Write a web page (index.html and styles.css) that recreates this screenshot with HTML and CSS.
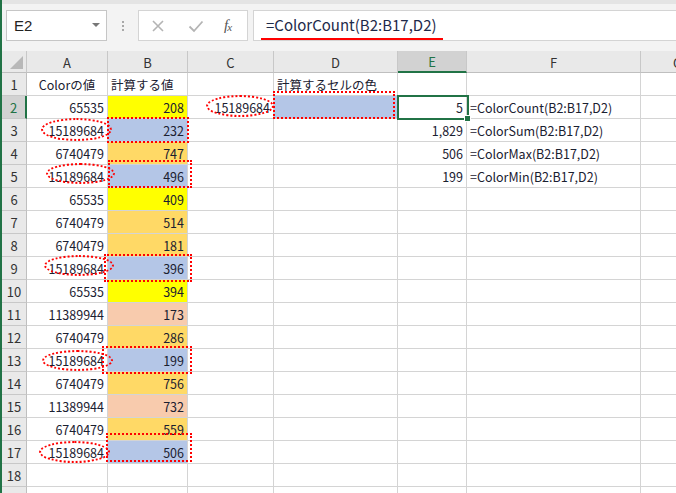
FILE: index.html
```html
<!DOCTYPE html>
<html lang="ja">
<head>
<meta charset="utf-8">
<title>ColorCount</title>
<link rel="stylesheet" href="styles.css">
</head>
<body>
<div class="app">
  <div class="toolbar">
    <div class="namebox"><span class="name">E2</span><span class="caret"></span></div>
    <div class="sep"><i></i><i></i><i></i></div>
    <div class="fbtns">
      <svg class="ico" width="14" height="14" viewBox="0 0 14 14"><path d="M2 2 L12 12 M12 2 L2 12" stroke="#b4b4b4" stroke-width="1.6" fill="none"/></svg>
      <svg class="ico" width="16" height="14" viewBox="0 0 16 14"><path d="M1.5 7.5 L6 12 L14.5 2.5" stroke="#b4b4b4" stroke-width="1.8" fill="none"/></svg>
      <span class="fx">f<sub>x</sub></span>
    </div>
    <div class="formula"><span class="ftext">=ColorCount(B2:B17,D2)</span></div>
  </div>

  <div class="sheet">
    <div class="corner"><span class="tri"></span></div>
    <div class="ch">A</div><div class="ch">B</div><div class="ch">C</div><div class="ch">D</div><div class="ch sel">E</div><div class="ch">F</div><div class="ch g">G</div>

    <div class="rh">1</div><div class="c ctr">Colorの値</div><div class="c">計算する値</div><div class="c"></div><div class="c">計算するセルの色</div><div class="c"></div><div class="c"></div><div class="c"></div>

    <div class="rh sel">2</div><div class="c r">65535</div><div class="c r y">208</div><div class="c r">15189684</div><div class="c bl"></div><div class="c r">5</div><div class="c">=ColorCount(B2:B17,D2)</div><div class="c"></div>
    <div class="rh">3</div><div class="c r">15189684</div><div class="c r bl">232</div><div class="c"></div><div class="c"></div><div class="c r">1,829</div><div class="c">=ColorSum(B2:B17,D2)</div><div class="c"></div>
    <div class="rh">4</div><div class="c r">6740479</div><div class="c r o">747</div><div class="c"></div><div class="c"></div><div class="c r">506</div><div class="c">=ColorMax(B2:B17,D2)</div><div class="c"></div>
    <div class="rh">5</div><div class="c r">15189684</div><div class="c r bl">496</div><div class="c"></div><div class="c"></div><div class="c r">199</div><div class="c">=ColorMin(B2:B17,D2)</div><div class="c"></div>
    <div class="rh">6</div><div class="c r">65535</div><div class="c r y">409</div><div class="c"></div><div class="c"></div><div class="c"></div><div class="c"></div><div class="c"></div>
    <div class="rh">7</div><div class="c r">6740479</div><div class="c r o">514</div><div class="c"></div><div class="c"></div><div class="c"></div><div class="c"></div><div class="c"></div>
    <div class="rh">8</div><div class="c r">6740479</div><div class="c r o">181</div><div class="c"></div><div class="c"></div><div class="c"></div><div class="c"></div><div class="c"></div>
    <div class="rh">9</div><div class="c r">15189684</div><div class="c r bl">396</div><div class="c"></div><div class="c"></div><div class="c"></div><div class="c"></div><div class="c"></div>
    <div class="rh">10</div><div class="c r">65535</div><div class="c r y">394</div><div class="c"></div><div class="c"></div><div class="c"></div><div class="c"></div><div class="c"></div>
    <div class="rh">11</div><div class="c r">11389944</div><div class="c r p">173</div><div class="c"></div><div class="c"></div><div class="c"></div><div class="c"></div><div class="c"></div>
    <div class="rh">12</div><div class="c r">6740479</div><div class="c r o">286</div><div class="c"></div><div class="c"></div><div class="c"></div><div class="c"></div><div class="c"></div>
    <div class="rh">13</div><div class="c r">15189684</div><div class="c r bl">199</div><div class="c"></div><div class="c"></div><div class="c"></div><div class="c"></div><div class="c"></div>
    <div class="rh">14</div><div class="c r">6740479</div><div class="c r o">756</div><div class="c"></div><div class="c"></div><div class="c"></div><div class="c"></div><div class="c"></div>
    <div class="rh">15</div><div class="c r">11389944</div><div class="c r p">732</div><div class="c"></div><div class="c"></div><div class="c"></div><div class="c"></div><div class="c"></div>
    <div class="rh">16</div><div class="c r">6740479</div><div class="c r o">559</div><div class="c"></div><div class="c"></div><div class="c"></div><div class="c"></div><div class="c"></div>
    <div class="rh">17</div><div class="c r">15189684</div><div class="c r bl">506</div><div class="c"></div><div class="c"></div><div class="c"></div><div class="c"></div><div class="c"></div>
    <div class="rh">18</div><div class="c"></div><div class="c"></div><div class="c"></div><div class="c"></div><div class="c"></div><div class="c"></div><div class="c"></div>
    <div class="rh">19</div><div class="c"></div><div class="c"></div><div class="c"></div><div class="c"></div><div class="c"></div><div class="c"></div><div class="c"></div>
  </div>

  <div class="selbox"><span class="handle"></span></div>

  <div class="ell e-c2"></div>
  <div class="ell e3"></div>
  <div class="ell e5"></div>
  <div class="ell e9"></div>
  <div class="ell e13"></div>
  <div class="ell e17"></div>

  <div class="rect r-d2"></div>
  <div class="rect r3"></div>
  <div class="rect r5"></div>
  <div class="rect r9"></div>
  <div class="rect r13"></div>
  <div class="rect r17"></div>
</div>
</body>
</html>
```

FILE: styles.css
```css
html, body {
  margin: 0;
  padding: 0;
  width: 676px;
  height: 493px;
  overflow: hidden;
  background: #fff;
}
.app {
  position: relative;
  width: 676px;
  height: 493px;
  overflow: hidden;
  font-family: "Noto Sans CJK JP", "Noto Sans", sans-serif;
  color: #1e1e1e;
  border-left: 2px solid #217346;
  box-sizing: border-box;
}
.toolbar {
  height: 51px;
  box-sizing: border-box;
  background: #f3f3f3;
  border-top: 4px solid #e4e4e4;
  display: flex;
  align-items: flex-start;
  padding-top: 6px;
  padding-left: 4px;
}
.namebox {
  width: 101px;
  height: 31px;
  box-sizing: border-box;
  background: #fff;
  border: 1px solid #c6c6c6;
  display: flex;
  align-items: center;
  justify-content: space-between;
  padding: 0 6px 0 7px;
}
.name {
  font-family: "Liberation Sans", sans-serif;
  font-size: 15px;
  color: #222;
}
.caret {
  width: 0;
  height: 0;
  border-left: 4px solid transparent;
  border-right: 4px solid transparent;
  border-top: 4px solid #777;
  margin-top: -2px;
}
.sep {
  width: 31px;
  height: 31px;
  display: flex;
  flex-direction: column;
  align-items: center;
  justify-content: center;
  gap: 2px;
}
.sep i {
  display: block;
  width: 2px;
  height: 2px;
  background: #a8a8a8;
}
.fbtns {
  width: 110px;
  height: 31px;
  box-sizing: border-box;
  background: #fff;
  border: 1px solid #d4d4d4;
  display: flex;
  align-items: center;
  padding-left: 12px;
}
.fbtns .ico:first-child { margin-right: 23px; }
.fbtns .ico + .ico { margin-right: 20px; }
.fx {
  font-family: "Liberation Serif", serif;
  font-style: italic;
  font-size: 15px;
  color: #555;
  letter-spacing: -1px;
}
.fx sub {
  font-size: 11px;
  vertical-align: -1px;
}
.formula {
  flex: 1;
  height: 31px;
  box-sizing: border-box;
  margin-left: 5px;
  background: #fff;
  border: 1px solid #d4d4d4;
  border-right: none;
  display: flex;
  align-items: center;
  padding-left: 12px;
}
.ftext {
  font-size: 15px;
  color: #1e2a4a;
  line-height: 18px;
  margin-top: -2px;
}

.sheet {
  display: grid;
  grid-template-columns: 25px 81px 80px 86px 124px 69px 174px 40px;
  grid-template-rows: 22px repeat(19, 23px);
  font-size: 12.5px;
}
.corner, .ch {
  background: #e9e9e9;
  border-right: 1px solid #c8c8c8;
  border-bottom: 1px solid #bfbfbf;
  box-sizing: border-box;
}
.corner {
  position: relative;
}
.tri {
  position: absolute;
  right: 3px;
  bottom: 3px;
  width: 0;
  height: 0;
  border-left: 13px solid transparent;
  border-bottom: 13px solid #b8b8b8;
}
.ch {
  display: flex;
  align-items: center;
  justify-content: center;
  font-size: 13px;
  color: #333;
  padding-top: 1px;
}
.ch.sel {
  background: #d2d2d2;
  border-bottom: 2px solid #217346;
  color: #217346;
}
.ch.g {
  justify-content: flex-start;
  padding-left: 32px;
  border-right: none;
}
.rh {
  background: #e9e9e9;
  border-right: 1px solid #bfbfbf;
  border-bottom: 1px solid #c8c8c8;
  box-sizing: border-box;
  display: flex;
  align-items: center;
  justify-content: center;
  font-size: 13px;
  color: #333;
}
.rh.sel {
  background: #d2d2d2;
  border-right: 2px solid #217346;
  color: #217346;
}
.c {
  border-right: 1px solid #d4d4d4;
  border-bottom: 1px solid #d4d4d4;
  box-sizing: border-box;
  display: flex;
  align-items: center;
  padding: 1px 3px 0 3px;
  white-space: nowrap;
  overflow: visible;
  color: #1a2030;
}
.c.r { justify-content: flex-end; }
.c.ctr { justify-content: center; }
.c.y { background: #ffff00; }
.c.o { background: #ffd966; }
.c.bl { background: #b4c6e7; }
.c.p { background: #f8cbad; }

.selbox {
  position: absolute;
  left: 395px;
  top: 95px;
  width: 72px;
  height: 25px;
  box-sizing: border-box;
  border: 2px solid #217346;
}
.handle {
  position: absolute;
  right: -4px;
  bottom: -4px;
  width: 5px;
  height: 5px;
  background: #217346;
  border: 1px solid #fff;
}

.ell, .rect {
  position: absolute;
  box-sizing: border-box;
  border: 2px dotted #ff0000;
}
.ell { border-radius: 50%; }
.e-c2 { left: 204px; top: 95px; width: 68px; height: 22px; }
.e3 { left: 39px; top: 118px; width: 71px; height: 23px; }
.e5 { left: 44px; top: 163px; width: 69px; height: 21px; }
.e9 { left: 42px; top: 255px; width: 70px; height: 21px; }
.e13 { left: 40px; top: 350px; width: 71px; height: 21px; }
.e17 { left: 37px; top: 441px; width: 71px; height: 22px; }

.r-d2 { left: 271px; top: 91px; width: 122px; height: 28px; }
.r3 { left: 105px; top: 117px; width: 82px; height: 26px; }
.r5 { left: 106px; top: 160px; width: 84px; height: 28px; }
.r9 { left: 102px; top: 254px; width: 88px; height: 28px; }
.r13 { left: 100px; top: 346px; width: 90px; height: 28px; }
.r17 { left: 104px; top: 433px; width: 86px; height: 29px; }

.ftext {
  position: relative;
}
.ftext::after {
  content: "";
  position: absolute;
  left: -5px;
  right: -6px;
  bottom: -6px;
  height: 2px;
  background: #ff0000;
}
```
